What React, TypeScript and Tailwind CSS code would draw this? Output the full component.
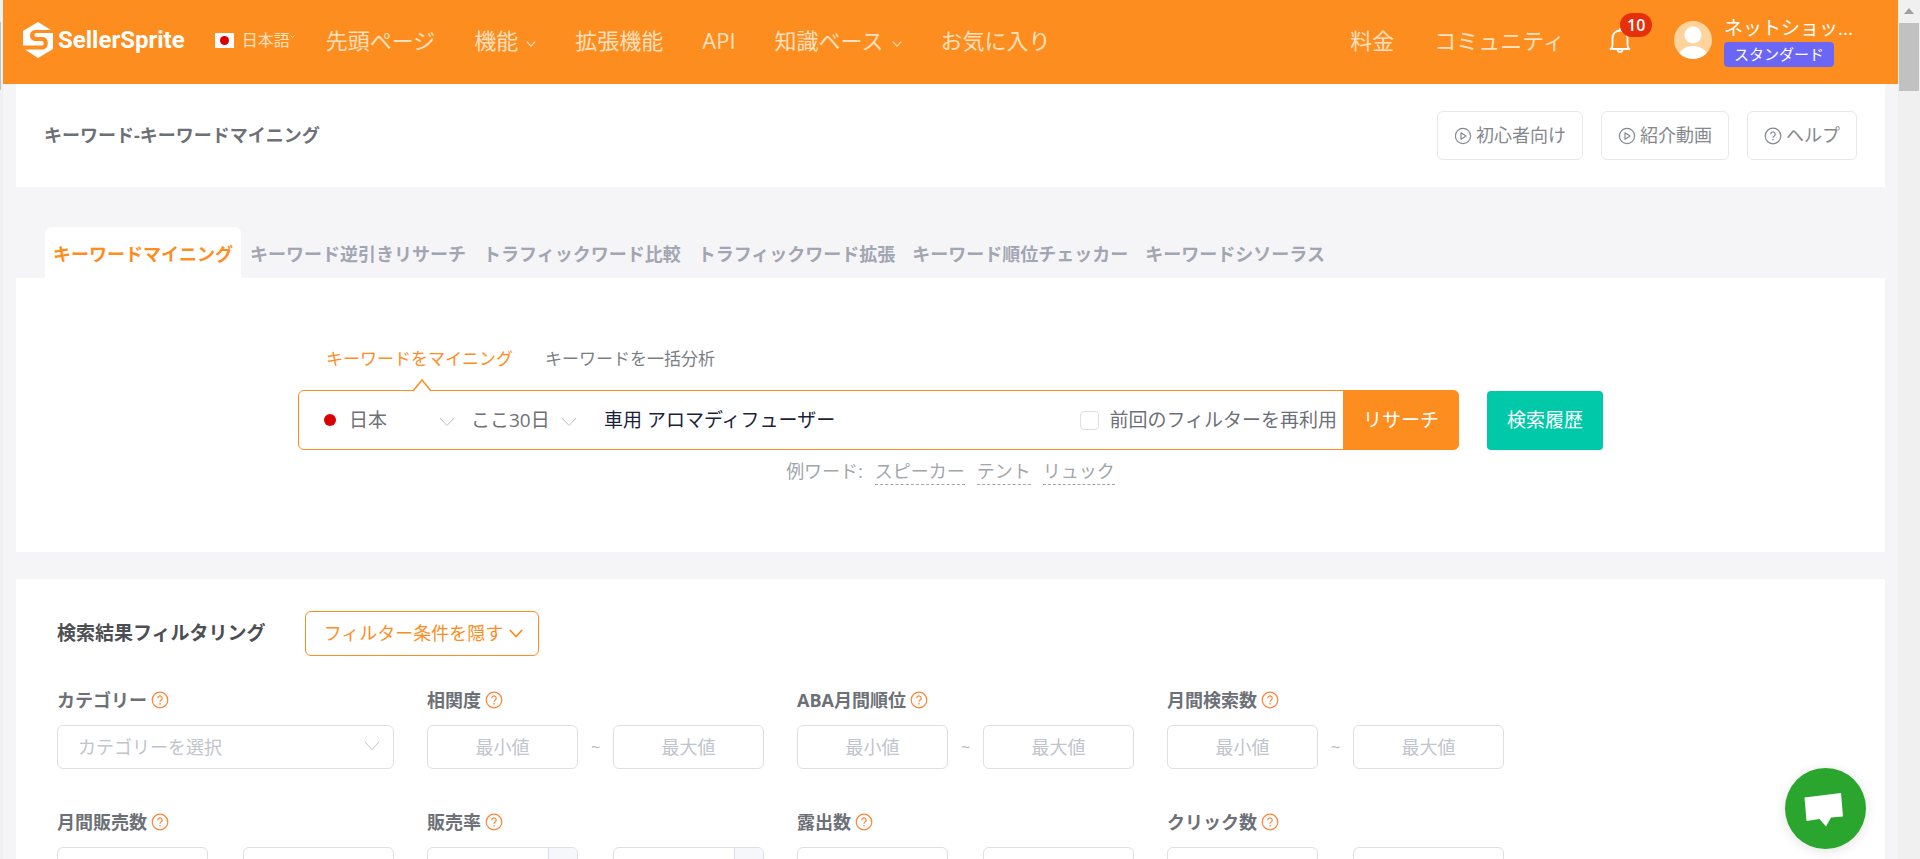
import { ReactNode, useState } from "react";

interface IFilter {
  id: string;
  label: string;
  kind: "select" | "range" | "percent";
}

const NAV_LINK = "text-[22px] leading-8 text-[#ffe0bf] whitespace-nowrap";

const TABS = [
  "キーワードマイニング",
  "キーワード逆引きリサーチ",
  "トラフィックワード比較",
  "トラフィックワード拡張",
  "キーワード順位チェッカー",
  "キーワードシソーラス",
];

const EXAMPLES = ["スピーカー", "テント", "リュック"];

const FILTERS: IFilter[] = [
  { id: "category", label: "カテゴリー", kind: "select" },
  { id: "relevance", label: "相関度", kind: "range" },
  { id: "aba", label: "ABA月間順位", kind: "range" },
  { id: "searches", label: "月間検索数", kind: "range" },
  { id: "sales", label: "月間販売数", kind: "range" },
  { id: "rate", label: "販売率", kind: "percent" },
  { id: "impressions", label: "露出数", kind: "range" },
  { id: "clicks", label: "クリック数", kind: "range" },
];

function Chevron({ className }: { className: string }) {
  return (
    <svg viewBox="0 0 16 10" fill="none" stroke="currentColor" className={className} aria-hidden="true">
      <path d="M1 1l7 7.5L15 1" />
    </svg>
  );
}

function PlayIcon() {
  return (
    <svg viewBox="0 0 18 18" fill="none" stroke="currentColor" strokeWidth="1.2" className="size-[18px]" aria-hidden="true">
      <circle cx="9" cy="9" r="7.6" />
      <path d="M7 5.8v6.4L12 9z" strokeLinejoin="round" />
    </svg>
  );
}

function HelpIcon() {
  return (
    <svg viewBox="0 0 18 18" fill="none" stroke="currentColor" strokeWidth="1.2" className="size-[18px]" aria-hidden="true">
      <circle cx="9" cy="9" r="7.8" />
      <path d="M6.8 7.2a2.2 2.2 0 1 1 3.4 1.8c-.8.5-1.2.8-1.2 1.7" />
      <path d="M9 12v1.4" />
    </svg>
  );
}

function Logo() {
  return (
    <a href="#" className="flex items-center gap-1 text-white">
      <svg viewBox="0 0 32 36" className="h-9 w-8" aria-hidden="true">
        <path fill="#fff" d="M16 0l13 8H14c-4 0-6 2.200-6 5.500s2 5.500 6 5.500h5.500c1.500 0 2.200.8 2.200 2.200s-.7 2.300-2.200 2.300H1V9z" />
        <path fill="#fff" d="M31 11v16L16 36 3 27.500h17c3.800 0 5.800-2.500 5.800-6.300S23.800 15 20 15h-5.500c-1.400 0-2-.6-2-1.900s.6-2.100 2-2.100z" />
      </svg>
      <span className="font-[Roboto] text-[24px] font-bold leading-8">SellerSprite</span>
    </a>
  );
}

function Header() {
  return (
    <header className="flex h-[84px] shrink-0 items-center bg-[#fe8d1f] pl-[19px] pr-10 pb-1">
      <Logo />
      <button type="button" className="ml-[30px] flex items-center text-base text-[#ffe0bf]">
        <span className="mr-2 flex h-[15px] w-[19px] items-center justify-center bg-white">
          <span className="size-[9px] rounded-full bg-[#d80000]" />
        </span>
        日本語
        <Chevron className="mb-2 h-[3px] w-[5px] shrink-0 stroke-3" />
      </button>
      <nav className="ml-[31px] flex items-center gap-[39px]">
        <a href="#" className={NAV_LINK}>先頭ページ</a>
        <button type="button" className={`flex items-center gap-2 ${NAV_LINK}`}>
          機能
          <Chevron className="mt-2 h-[6px] w-[10px] stroke-2" />
        </button>
        <a href="#" className={NAV_LINK}>拡張機能</a>
        <a href="#" className={NAV_LINK}>API</a>
        <button type="button" className={`flex items-center gap-2 ${NAV_LINK}`}>
          知識ベース
          <Chevron className="mt-2 h-[6px] w-[10px] stroke-2" />
        </button>
        <a href="#" className={NAV_LINK}>お気に入り</a>
      </nav>
      <div className="ml-auto flex items-center">
        <a href="#" className={`mr-10 ${NAV_LINK}`}>料金</a>
        <a href="#" className={`mr-11 ${NAV_LINK}`}>コミュニティ</a>
        <button type="button" aria-label="通知" className="relative mr-[43px] text-white">
          <svg viewBox="0 0 22 26" fill="none" stroke="currentColor" strokeWidth="1.800" strokeLinecap="round" className="h-[26px] w-[22px]" aria-hidden="true">
            <path d="M11 2v1.500M1.500 22h19M1.500 22c1.500-1 2-2 2-4v-7a7.500 7.500 0 0 1 15 0v7c0 2 .5 3 2 4" />
            <path d="M8.500 22.500a2.500 2.500 0 0 0 5 0" />
          </svg>
          <span className="absolute -top-[14px] left-[11px] rounded-full bg-[#e6300c] px-[7px] font-['Open_Sans'] text-base font-semibold leading-6">10</span>
        </button>
        <svg viewBox="0 0 38 38" className="mr-3 size-[38px] rounded-full" aria-hidden="true">
          <rect width="38" height="38" fill="#ffd39c" />
          <circle cx="19" cy="14" r="8.500" fill="#fff" />
          <ellipse cx="19" cy="35" rx="14" ry="10" fill="#fff" />
        </svg>
        <div className="w-[134px] pt-px text-white">
          <p className="text-[19px] leading-7 whitespace-nowrap">ネットショッ...</p>
          <span className="block w-max whitespace-nowrap rounded bg-[#6b66f6] px-[10px] text-[15px] leading-[25px]">スタンダード</span>
        </div>
      </div>
    </header>
  );
}

function GuideButton({ icon, children }: { icon: ReactNode; children: string }) {
  return (
    <button type="button" className="flex h-[49px] items-center gap-1 rounded-md border border-[#e6e8eb] px-4 text-[18px] text-[#84888e]">
      {icon}
      {children}
    </button>
  );
}

function SearchPanel() {
  const [keyword, setKeyword] = useState("車用 アロマディフューザー");
  const [reuse, setReuse] = useState(false);

  return (
    <section className="bg-white px-7 pb-[67px] pt-[66px]">
      <div className="mx-auto w-full max-w-[1305px]">
        <div className="flex gap-8 pl-7 text-[17px] leading-[30px]">
          <button type="button" className="text-[#fe8d1f]">キーワードをマイニング</button>
          <button type="button" className="text-[#7b7f85]">キーワードを一括分析</button>
        </div>
        <form className="relative mt-4 flex items-center gap-7 text-[19px]" onSubmit={(e) => e.preventDefault()}>
          <svg viewBox="0 0 20 13" className="absolute -top-[11px] left-[114px] z-10 h-[13px] w-5" aria-hidden="true">
            <path d="M0 13L10 1l10 12z" fill="#fff" />
            <path d="M1 12L10 1l9 11" fill="none" stroke="#fe8d1f" strokeWidth="1.500" />
          </svg>
          <div className="flex h-[60px] min-w-0 flex-1 items-center rounded-md border border-[#fe8d1f] text-[#6c7077]">
            <span className="ml-[25px] size-3 shrink-0 rounded-full bg-[#d80000]" />
            <div className="relative ml-[13px] w-[106px] shrink-0">
              <select aria-label="国" className="w-full appearance-none bg-transparent outline-none">
                <option>日本</option>
              </select>
              <Chevron className="pointer-events-none absolute right-0 top-[11px] h-[10px] w-4 text-[#c0c4cc]" />
            </div>
            <div className="relative ml-4 w-[106px] shrink-0">
              <select aria-label="期間" className="w-full appearance-none bg-transparent outline-none">
                <option>ここ30日</option>
              </select>
              <Chevron className="pointer-events-none absolute right-0 top-[11px] h-[10px] w-4 text-[#c0c4cc]" />
            </div>
            <input
              aria-label="キーワード"
              type="text"
              value={keyword}
              onChange={(e) => setKeyword(e.target.value)}
              className="ml-[27px] min-w-0 flex-1 bg-transparent text-[#1c1f3a] outline-none"
            />
            <label className="flex shrink-0 items-center gap-[10px] pr-[6px]">
              <input
                type="checkbox"
                checked={reuse}
                onChange={(e) => setReuse(e.target.checked)}
                className="size-[19px] appearance-none rounded-sm border border-[#dcdfe6] checked:bg-[#fe8d1f]"
              />
              前回のフィルターを再利用
            </label>
            <button type="submit" className="-my-px -mr-px h-[60px] w-[116px] shrink-0 rounded-r-md bg-[#fe8d1f] text-white">
              リサーチ
            </button>
          </div>
          <button type="button" className="h-[59px] w-[116px] shrink-0 rounded bg-[#00c9a9] text-white">
            検索履歴
          </button>
        </form>
        <div className="mt-2 flex justify-center gap-3 text-[18px] leading-[26px] text-[#a2a5aa]">
          <span>例ワード:</span>
          {EXAMPLES.map((word) => (
            <a key={word} href="#" className="border-b border-dashed border-[#a2a5aa]">{word}</a>
          ))}
        </div>
      </div>
    </section>
  );
}

function FilterInput({ label, placeholder, percent }: { label: string; placeholder: string; percent: boolean }) {
  return (
    <div className="flex h-11 min-w-0 flex-1 overflow-hidden rounded-md border border-[#dcdfe6]">
      <input
        type="text"
        aria-label={`${label} ${placeholder}`}
        placeholder={placeholder}
        className="w-0 min-w-0 flex-1 text-center outline-none placeholder:text-[#c0c4cc]"
      />
      {percent && (
        <span className="flex w-[29px] items-center justify-center border-l border-[#dcdfe6] bg-[#f5f7fa] text-[#909399]">%</span>
      )}
    </div>
  );
}

function FilterField({ filter }: { filter: IFilter }) {
  const title = (
    <>
      {filter.label}
      <span className="text-[#ff8437]"><HelpIcon /></span>
    </>
  );
  const titleClass = "mb-3 flex items-center gap-1 font-bold leading-[26px] text-[#6c7077]";

  if (filter.kind === "select") {
    return (
      <div className="text-[18px]">
        <label htmlFor={filter.id} className={titleClass}>{title}</label>
        <div className="relative">
          <select id={filter.id} className="h-11 w-full appearance-none rounded-md border border-[#dcdfe6] px-5 text-[#c0c4cc] outline-none">
            <option>カテゴリーを選択</option>
          </select>
          <Chevron className="pointer-events-none absolute right-[14px] top-4 h-[10px] w-4 text-[#c0c4cc]" />
        </div>
      </div>
    );
  }

  return (
    <div role="group" aria-labelledby={filter.id} className="text-[18px]">
      <div id={filter.id} className={titleClass}>{title}</div>
      <div className="flex items-center">
        <FilterInput label={filter.label} placeholder="最小値" percent={filter.kind === "percent"} />
        <span className="w-[35px] text-center text-base text-[#b4b8c0]">~</span>
        <FilterInput label={filter.label} placeholder="最大値" percent={filter.kind === "percent"} />
      </div>
    </div>
  );
}

export default function App() {
  const [tab, setTab] = useState(0);

  return (
    <div className="flex h-screen overflow-hidden bg-[#f0f0f0] font-['Open_Sans','Noto_Sans_CJK_JP',sans-serif]">
      <div className="w-[3px] shrink-0 pt-[22px]">
        <div className="h-[68px] w-px bg-[#c1c1c1]" />
      </div>

      <div className="flex min-w-0 flex-1 flex-col bg-[#f5f5f8]">
        <Header />
        <main className="px-[13px]">
          <section className="flex h-[103px] items-center gap-[18px] bg-white pl-7 pr-7">
            <h1 className="mr-auto text-[18px] font-bold text-[#6c7077]">キーワード-キーワードマイニング</h1>
            <GuideButton icon={<PlayIcon />}>初心者向け</GuideButton>
            <GuideButton icon={<PlayIcon />}>紹介動画</GuideButton>
            <GuideButton icon={<HelpIcon />}>ヘルプ</GuideButton>
          </section>

          <div className="mt-10 flex gap-px pl-[29px]" role="tablist">
            {TABS.map((name, index) => (
              <button
                key={name}
                type="button"
                role="tab"
                aria-selected={tab === index}
                onClick={() => setTab(index)}
                className={`h-[51px] rounded-t-md px-2 pt-[3px] text-[18px] font-bold whitespace-nowrap ${tab === index ? "bg-white text-[#fe8d1f]" : "text-[#a2a6b2]"}`}
              >
                {name}
              </button>
            ))}
          </div>
          <SearchPanel />

          <section className="mt-[27px] bg-white px-[41px] pb-8 pt-8">
            <div className="flex items-center gap-[39px]">
              <h2 className="text-[19px] font-bold text-[#4c4f54]">検索結果フィルタリング</h2>
              <button type="button" className="flex h-[45px] items-center gap-[6px] rounded-md border border-[#fe8d1f] pl-[18px] pr-[15px] text-[18px] text-[#fe8d1f]">
                フィルター条件を隠す
                <Chevron className="h-[9px] w-[14px] stroke-2" />
              </button>
            </div>
            <div className="mt-[31px] grid max-w-[1447px] grid-cols-2 gap-x-[33px] gap-y-10 xl:grid-cols-4">
              {FILTERS.map((filter) => (
                <FilterField key={filter.id} filter={filter} />
              ))}
            </div>
          </section>
        </main>
      </div>

      {/* barra de scroll */}
      <div className="flex w-[22px] shrink-0 flex-col items-center">
        <svg viewBox="0 0 10 6" className="mb-[9px] mt-2 h-[6px] w-[10px]" aria-hidden="true">
          <path d="M5 0l5 6H0z" fill="#a0a0a0" />
        </svg>
        <div className="h-[68px] w-[20px] bg-[#c1c1c1]" />
      </div>

      <button type="button" aria-label="チャット" className="fixed bottom-[10px] right-[54px] size-[81px] rounded-full bg-[#2aa52d] shadow-[0_2px_12px_rgba(0,0,0,0.12)]">
        <svg viewBox="0 0 81 81" fill="#fff" aria-hidden="true">
          <path d="M19.500 29.500L56 25l2 23.500-12 1-5 9-6.500-7.500-13 2z" />
        </svg>
      </button>
    </div>
  );
}
